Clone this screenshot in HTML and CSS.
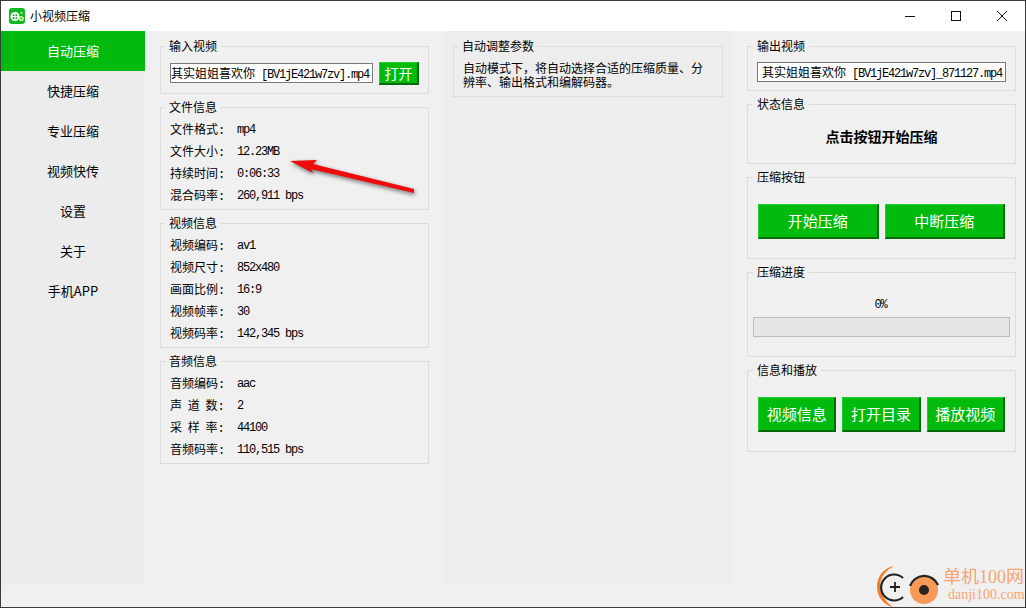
FILE: index.html
```html
<!DOCTYPE html>
<html lang="en">
<head>
    <meta charset="UTF-8">
    <meta name="viewport" content="width=device-width, initial-scale=1.0">
    <title>小视频压缩</title>
    <link rel="stylesheet" href="styles.css">
</head>
<body>
    <div class="window">
        <div class="titlebar">
            <svg class="app-icon" width="16" height="16" viewBox="0 0 16 16">
                <rect width="16" height="16" rx="3" fill="#12b81f"/>
                <circle cx="6" cy="8.5" r="4.5" fill="#fff"/>
                <circle cx="4.6" cy="7.2" r="1" fill="#12b81f"/>
                <circle cx="7.4" cy="7.2" r="1" fill="#12b81f"/>
                <circle cx="4.6" cy="10" r="1" fill="#12b81f"/>
                <circle cx="7.4" cy="10" r="1" fill="#12b81f"/>
                <circle cx="12.2" cy="10.5" r="2.6" fill="#d5f2a8"/>
                <circle cx="12.2" cy="10.5" r="1" fill="#12b81f"/>
                <path d="M11 5 L13 3.5 L13.5 6 Z" fill="#d5f2a8"/>
            </svg>
            <span class="app-title">小视频压缩</span>
            <div class="win-buttons">
                <div class="win-button">
                    <svg width="12" height="12" viewBox="0 0 12 12"><path d="M1 6.5H11" stroke="#111" fill="none"/></svg>
                </div>
                <div class="win-button">
                    <svg width="12" height="12" viewBox="0 0 12 12"><rect x="1.5" y="1.5" width="9" height="9" stroke="#111" fill="none"/></svg>
                </div>
                <div class="win-button">
                    <svg width="12" height="12" viewBox="0 0 12 12"><path d="M1 1L11 11M11 1L1 11" stroke="#111" fill="none"/></svg>
                </div>
            </div>
        </div>

        <div class="main">
            <div class="sidebar">
                <div class="nav-item active">自动压缩</div>
                <div class="nav-item">快捷压缩</div>
                <div class="nav-item">专业压缩</div>
                <div class="nav-item">视频快传</div>
                <div class="nav-item">设置</div>
                <div class="nav-item">关于</div>
                <div class="nav-item">手机APP</div>
            </div>

            <div class="columns">
                <div class="col col-left">
                    <fieldset class="group group-left">
                        <legend>输入视频</legend>
                        <div class="input-row">
                            <div class="field field-input">其实姐姐喜欢你<span class="mono"> [BV1jE421w7zv].mp4</span></div>
                            <button class="btn btn-open">打开</button>
                        </div>
                    </fieldset>
                    <fieldset class="group info">
                        <legend>文件信息</legend>
                        <div class="row"><span class="key">文件格式<span class="mono">:</span></span><span class="mono value">mp4</span></div>
                        <div class="row"><span class="key">文件大小<span class="mono">:</span></span><span class="mono value">12.23MB</span></div>
                        <div class="row"><span class="key">持续时间<span class="mono">:</span></span><span class="mono value">0:06:33</span></div>
                        <div class="row"><span class="key">混合码率<span class="mono">:</span></span><span class="mono value">260,911 bps</span></div>
                    </fieldset>
                    <fieldset class="group info">
                        <legend>视频信息</legend>
                        <div class="row"><span class="key">视频编码<span class="mono">:</span></span><span class="mono value">av1</span></div>
                        <div class="row"><span class="key">视频尺寸<span class="mono">:</span></span><span class="mono value">852x480</span></div>
                        <div class="row"><span class="key">画面比例<span class="mono">:</span></span><span class="mono value">16:9</span></div>
                        <div class="row"><span class="key">视频帧率<span class="mono">:</span></span><span class="mono value">30</span></div>
                        <div class="row"><span class="key">视频码率<span class="mono">:</span></span><span class="mono value">142,345 bps</span></div>
                    </fieldset>
                    <fieldset class="group info">
                        <legend>音频信息</legend>
                        <div class="row"><span class="key">音频编码<span class="mono">:</span></span><span class="mono value">aac</span></div>
                        <div class="row"><span class="key spaced">声 道 数<span class="mono">:</span></span><span class="mono value">2</span></div>
                        <div class="row"><span class="key spaced">采 样 率<span class="mono">:</span></span><span class="mono value">44100</span></div>
                        <div class="row"><span class="key">音频码率<span class="mono">:</span></span><span class="mono value">110,515 bps</span></div>
                    </fieldset>
                </div>

                <div class="col col-mid">
                    <fieldset class="group auto">
                        <legend>自动调整参数</legend>
                        <p class="auto-text">自动模式下，将自动选择合适的压缩质量、分辨率、输出格式和编解码器。</p>
                    </fieldset>
                </div>

                <div class="col col-right">
                    <fieldset class="group">
                        <legend>输出视频</legend>
                        <div class="field field-output">其实姐姐喜欢你<span class="mono"> [BV1jE421w7zv]_871127.mp4</span></div>
                    </fieldset>
                    <fieldset class="group">
                        <legend>状态信息</legend>
                        <div class="status">点击按钮开始压缩</div>
                    </fieldset>
                    <fieldset class="group">
                        <legend>压缩按钮</legend>
                        <div class="btn-row">
                            <button class="btn">开始压缩</button>
                            <button class="btn">中断压缩</button>
                        </div>
                    </fieldset>
                    <fieldset class="group">
                        <legend>压缩进度</legend>
                        <div class="progress">
                            <div class="progress-label mono">0%</div>
                            <div class="progress-bar"></div>
                        </div>
                    </fieldset>
                    <fieldset class="group">
                        <legend>信息和播放</legend>
                        <div class="btn-row">
                            <button class="btn">视频信息</button>
                            <button class="btn">打开目录</button>
                            <button class="btn">播放视频</button>
                        </div>
                    </fieldset>
                </div>
            </div>
        </div>

        <!-- red annotation arrow drawn over the file info box -->
        <svg class="arrow" width="140" height="50" viewBox="0 0 140 50">
            <polygon points="10,11 37,10 33,14 134,39 134,43 31,19 33,23" fill="#f00a0a"/>
        </svg>

        <!-- site watermark -->
        <div class="watermark">
            <svg class="wm-logo" width="64" height="46" viewBox="0 0 64 46">
                <path d="M17 5 C6 7 0 16 0 26 C0 36 7 44 16 46 C9 41 3 34 3 25 C3 16 9 9 17 5 Z" fill="#f57c1f"/>
                <path d="M26 17 A13 13 0 1 0 26 36" stroke="#222" stroke-width="2.2" fill="none"/>
                <path d="M13 26H23M18 21V31" stroke="#222" stroke-width="1.8" fill="none"/>
                <circle cx="47" cy="29" r="14" fill="#f79a55"/>
                <path d="M33 25 A15 15 0 0 1 61 24" stroke="#222" stroke-width="2.2" fill="none"/>
                <circle cx="47" cy="29" r="5" fill="#2b2320"/>
            </svg>
            <div class="wm-text">
                <div class="wm-cn">单机100网</div>
                <div class="wm-en">danji100.com</div>
            </div>
        </div>
    </div>
</body>
</html>
```

FILE: styles.css
```css
html, body {
    margin: 0;
    padding: 0;
}

body {
    font-family: "Noto Sans CJK SC", "Liberation Sans", sans-serif;
    font-size: 12px;
    color: #000;
}

.window {
    position: relative;
    width: 1026px;
    height: 608px;
    box-sizing: border-box;
    border: 1px solid #3a3a3a;
    background-color: #f0f0f0;
    overflow: hidden;
    display: flex;
    flex-direction: column;
}

.titlebar {
    height: 30px;
    flex: none;
    background-color: #fff;
    display: flex;
    align-items: center;
    padding-left: 8px;
}

.app-icon {
    margin-right: 5px;
}

.app-title {
    line-height: 16px;
}

.win-buttons {
    margin-left: auto;
    display: flex;
}

.win-button {
    width: 46px;
    height: 30px;
    display: flex;
    align-items: center;
    justify-content: center;
}

.main {
    flex: 1;
    display: flex;
    min-height: 0;
}

.sidebar {
    width: 144px;
    height: 554px;
    flex: none;
    background-color: #ececec;
}

.nav-item {
    height: 40px;
    line-height: 39px;
    text-align: center;
    font-size: 13px;
}

.nav-item.active {
    background-color: #00bb0d;
    color: #fff;
}

.columns {
    display: grid;
    grid-template-columns: 300px 287px 293px;
    height: 554px;
}

.col {
    padding-top: 8px;
}

.col-left {
    padding-left: 15px;
    padding-right: 16px;
}

.col-mid {
    padding-left: 8px;
    padding-right: 9px;
    background-color: #ededed;
}

.col-right {
    padding-left: 15px;
    padding-right: 9px;
}

.group {
    margin: 0 0 6px;
    padding: 8px 10px;
    min-width: 0;
    border: 1px solid #dcdcdc;
}

.group legend {
    padding: 0 4px 1px;
    margin-left: -5px;
    line-height: 14px;
    font-size: 12px;
}

.group-left {
    padding-left: 9px;
}

.mono {
    font-family: "Liberation Mono", monospace;
    font-size: 12px;
    letter-spacing: -1.2px;
}

.input-row {
    display: flex;
    align-items: flex-start;
    gap: 6px;
}

.field {
    height: 20px;
    line-height: 18px;
    box-sizing: border-box;
    border: 1px solid #7a7a7a;
    background-color: #fff;
    white-space: pre;
    overflow: hidden;
}

.field-input {
    width: 203px;
    flex: none;
    margin-top: 1px;
}

.field-output {
    padding-left: 4px;
    margin: 0 -1px;
}

.btn {
    flex: 1;
    height: 35px;
    padding: 0 0 2px;
    box-sizing: border-box;
    border: 1px solid;
    border-color: #1fd02c #006a08 #006a08 #1fd02c;
    border-bottom-width: 2px;
    border-right-width: 2px;
    background-color: #00bb0d;
    color: #fff;
    font-family: inherit;
    font-size: 15px;
}

.btn-open {
    flex: none;
    width: 40px;
    height: 23px;
    padding: 0;
    font-size: 14px;
    line-height: 18px;
}

.info {
    padding: 3px 10px 3px 9px;
}

.row {
    height: 22px;
    line-height: 22px;
    display: flex;
}

.key {
    width: 67px;
    flex: none;
}

.value {
    line-height: 24px;
}

.spaced {
    word-spacing: 3px;
}

.auto {
    padding: 7px 9px;
}

.auto-text {
    margin: 0;
    line-height: 14px;
}

.status {
    height: 35px;
    line-height: 33px;
    text-align: center;
    font-weight: bold;
    font-size: 14px;
}

.btn-row {
    display: flex;
    gap: 6px;
    padding: 11px 0;
}

.progress {
    margin: 0 -5px;
    padding: 10px 0 11px;
}

.progress-label {
    height: 14px;
    line-height: 14px;
    text-align: center;
    margin-bottom: 5px;
    padding-right: 2px;
}

.progress-bar {
    height: 20px;
    box-sizing: border-box;
    border: 1px solid #bcbcbc;
    background-color: #e6e6e6;
}

.arrow {
    position: absolute;
    left: 279px;
    top: 149px;
    overflow: visible;
    filter: drop-shadow(1px 2px 2px rgba(0, 0, 0, 0.55));
}

.watermark {
    position: absolute;
    right: 0;
    bottom: 0;
    width: 148px;
    height: 46px;
    display: flex;
}

.wm-logo {
    flex: none;
}

.wm-text {
    margin-left: 2px;
    color: #f5a66e;
    font-family: "Liberation Serif", "Noto Sans CJK SC", serif;
    white-space: nowrap;
}

.wm-cn {
    font-size: 18px;
    line-height: 22px;
    margin-top: 5px;
}

.wm-en {
    font-size: 14px;
    line-height: 14px;
    margin-left: 5px;
}
```
